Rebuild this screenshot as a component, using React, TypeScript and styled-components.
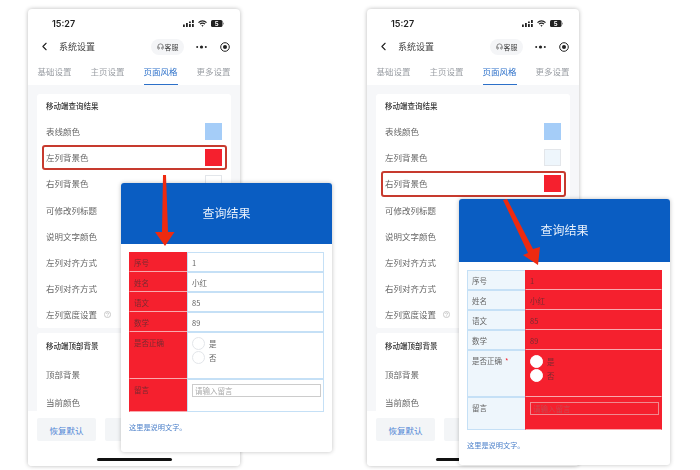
import React from "react";
import styled, { createGlobalStyle } from "styled-components";
import { ChevronLeft, Headphones } from "lucide-react";

const Global = createGlobalStyle`
  html, body { margin: 0; padding: 0; background: #fff; }
  body { font-family: "Noto Sans CJK SC", "Noto Sans", sans-serif; color: #555; overflow: hidden; }
`;

const Page = styled.div`
  width: 700px;
  height: 470px;
  box-sizing: border-box;
  padding: 9px 0 0 28px;
  display: flex;
  gap: 127px;
  align-items: flex-start;
  filter: blur(0.35px);
`;
const Frame = styled.div`
  position: relative;
  width: 212px;
  height: 457px;
  flex: none;
`;
const Phone = styled.div`
  height: 100%;
  display: flex;
  flex-direction: column;
  background: #fff;
  border-radius: 4px;
  overflow: hidden;
  box-shadow: 0 0 4px rgba(0, 0, 0, 0.28);
`;
const StatusBar = styled.div`
  height: 28px;
  flex: none;
  display: flex;
  align-items: center;
  justify-content: space-between;
  padding: 0 16px 0 24px;
`;
const Time = styled.span`
  font: 600 9px "Inter", "Noto Sans", sans-serif;
  color: #222;
`;
const StatusIcons = styled.div`
  display: flex;
  align-items: center;
  gap: 4px;
`;
const NavBar = styled.div`
  height: 19px;
  flex: none;
  display: flex;
  align-items: center;
  padding: 0 10px;
  color: #222;
`;
const NavTitle = styled.span`
  font-size: 9px;
  color: #444;
  margin-left: 8px;
  flex: 1;
`;
const ServicePill = styled.span`
  display: flex;
  align-items: center;
  gap: 1px;
  height: 16px;
  width: 33px;
  justify-content: center;
  border-radius: 8px;
  background: #f4f5f7;
  font-size: 7px;
  color: #444;
`;
const NavActions = styled.div`
  display: flex;
  align-items: center;
  gap: 13px;
  margin-left: 12px;
`;
const Tabs = styled.div`
  height: 29px;
  flex: none;
  display: grid;
  grid-template-columns: repeat(4, 1fr);
  justify-items: center;
  align-items: end;
`;
const Tab = styled.div<{ $active?: boolean }>`
  font-size: 8.5px;
  line-height: 12px;
  padding: 0 0 7px;
  width: 34px;
  text-align: center;
  white-space: nowrap;
  color: ${(p) => (p.$active ? "#2c70c9" : "#9a9ea4")};
  border-bottom: 1px solid ${(p) => (p.$active ? "#2c70c9" : "transparent")};
`;
const Body = styled.div`
  flex: 1;
  min-height: 0;
  overflow: hidden;
  background: #f6f7f9;
  padding: 9px 9px 0;
  display: flex;
  flex-direction: column;
  gap: 5px;
`;
const Card = styled.div`
  background: #fff;
  border-radius: 3px;
  padding: 0 9px;
  flex: none;
`;
const CardTitle = styled.div<{ $h: number }>`
  height: ${(p) => p.$h}px;
  box-sizing: border-box;
  padding-bottom: 1px;
  display: flex;
  align-items: center;
  font-size: 7.5px;
  font-weight: 500;
  color: #333;
`;
const Row = styled.div<{ $h: number; $on?: boolean }>`
  position: relative;
  height: ${(p) => p.$h}px;
  display: flex;
  align-items: center;
  justify-content: space-between;
  font-size: 8.5px;
  color: #666;
  white-space: nowrap;
  &::after {
    content: "";
    display: ${(p) => (p.$on ? "block" : "none")};
    position: absolute;
    inset: 1px -5px 0 -4px;
    border: 2px solid #c73a2e;
    border-radius: 3px;
  }
`;
const LabelWrap = styled.span`
  display: flex;
  align-items: center;
  gap: 7px;
`;
const Swatch = styled.span<{ $color: string; $edged?: boolean }>`
  width: 17px;
  height: 17px;
  flex: none;
  background: ${(p) => p.$color};
  box-sizing: border-box;
  border: ${(p) => (p.$edged ? "1px solid #e3e6ea" : "none")};
`;
const Footer = styled.div`
  height: 55px;
  box-sizing: border-box;
  flex: none;
  padding: 7px 9px 0;
  display: flex;
  flex-direction: column;
  background: #fff;
`;
const Buttons = styled.div`
  display: flex;
  gap: 9px;
`;
const FootButton = styled.div`
  width: 59px;
  height: 23px;
  display: flex;
  align-items: center;
  justify-content: center;
  background: #f3f5f7;
  border-radius: 2px;
  font-size: 8.5px;
  color: #5287d6;
`;
const HomeBar = styled.div`
  width: 75px;
  height: 3px;
  background: #111;
  border-radius: 2px;
  align-self: center;
  margin-top: 17px;
`;
const Popup = styled.div<{ $left: number; $top: number; $height: number }>`
  position: absolute;
  left: ${(p) => p.$left}px;
  top: ${(p) => p.$top}px;
  width: 211px;
  height: ${(p) => p.$height}px;
  display: flex;
  flex-direction: column;
  background: #fff;
  border-radius: 3px;
  overflow: hidden;
  box-shadow: 0 0 4px rgba(0, 0, 0, 0.25);
`;
const PopupHead = styled.div<{ $h: number }>`
  height: ${(p) => p.$h}px;
  flex: none;
  box-sizing: border-box;
  padding-bottom: 3px;
  display: flex;
  align-items: center;
  justify-content: center;
  background: #0a5dc2;
  color: #e6effa;
  font-size: 12px;
`;
const PopupBody = styled.div`
  padding: 8px 8px 0;
`;
const Table = styled.div`
  display: grid;
  grid-template-columns: 58px 137px;
  grid-template-rows: 20px 20px 20px 20px 47px 33px;
  width: 195px;
`;
const HeadCell = styled.div<{ $red: boolean }>`
  box-sizing: border-box;
  padding: 3.5px 0 0 4px;
  font-size: 7.5px;
  line-height: 11px;
  background: ${(p) => (p.$red ? "#f5202e" : "#eef6fc")};
  color: ${(p) => (p.$red ? "#7c2a31" : "#666")};
  border: 1px solid ${(p) => (p.$red ? "#f5202e" : "#c5e0f6")};
  border-bottom-color: ${(p) => (p.$red ? "#f9a9ae" : "#c5e0f6")};
  border-right: none;
`;
const Star = styled.span`
  color: #f5202e;
  margin-left: 3px;
`;
const ValueCell = styled.div<{ $red: boolean }>`
  box-sizing: border-box;
  padding: 3.5px 4px 0 4px;
  font-size: 7.5px;
  line-height: 11px;
  background: ${(p) => (p.$red ? "#f5202e" : "#fff")};
  color: ${(p) => (p.$red ? "#7c2a31" : "#666")};
  border: 1px solid ${(p) => (p.$red ? "#f5202e" : "#c5e0f6")};
  border-bottom-color: ${(p) => (p.$red ? "#f9a9ae" : "#c5e0f6")};
`;
const Radios = styled.div`
  display: flex;
  flex-direction: column;
`;
const RadioLine = styled.label`
  display: flex;
  align-items: center;
  gap: 4px;
  height: 14px;
`;
const RadioDot = styled.span<{ $red: boolean }>`
  width: 13px;
  height: 13px;
  box-sizing: border-box;
  border-radius: 50%;
  background: #fff;
  border: 1px solid ${(p) => (p.$red ? "#fff" : "#e3e6ea")};
`;
const TextInput = styled.input<{ $red: boolean }>`
  display: block;
  box-sizing: border-box;
  width: 129px;
  height: 13px;
  padding: 0 2px;
  margin: 0.5px 0 0;
  font: 7.5px "Noto Sans CJK SC", sans-serif;
  background: transparent;
  border: 1px solid ${(p) => (p.$red ? "#f08a8f" : "#ccc")};
  outline: none;
  &::placeholder {
    color: ${(p) => (p.$red ? "#c9474f" : "#aaa")};
    opacity: 1;
  }
`;
const Note = styled.div`
  margin-top: 10px;
  font-size: 7.2px;
  line-height: 11px;
  color: #4a7fc9;
`;
const ArrowSvg = styled.svg<{ $left: number; $top: number }>`
  position: absolute;
  left: ${(p) => p.$left}px;
  top: ${(p) => p.$top}px;
  overflow: visible;
`;

const Signal = () => (
  <svg width="11" height="7" viewBox="0 0 11 7" fill="#222">
    <rect x="0" y="4.5" width="1.8" height="2.5" />
    <rect x="3" y="3" width="1.8" height="4" />
    <rect x="6" y="1.5" width="1.8" height="1.6" />
    <rect x="6" y="4" width="1.8" height="3" />
    <rect x="9" y="0" width="1.8" height="3" />
    <rect x="9" y="4" width="1.8" height="3" />
  </svg>
);
const Wifi = () => (
  <svg width="9" height="7" viewBox="0 0 9 7" fill="none" stroke="#222" strokeWidth="1.2">
    <path d="M.5 2.6a5.6 5.6 0 0 1 8 0" />
    <path d="M2 4.1a3.5 3.5 0 0 1 5 0" />
    <path d="M4.5 6.8 3.4 5.6a1.5 1.5 0 0 1 2.2 0z" fill="#222" stroke="none" />
  </svg>
);
const Battery = () => (
  <svg width="13" height="7" viewBox="0 0 13 7">
    <rect x="0" y="0" width="11.5" height="7" rx="1.6" fill="#222" />
    <rect x="12" y="2.4" width="1" height="2.2" rx="0.5" fill="#999" />
    <text x="5.7" y="6" fontSize="6" fontWeight="700" textAnchor="middle" fill="#fff" fontFamily="Inter, sans-serif">5</text>
  </svg>
);
const Dots = () => (
  <svg width="11" height="4" viewBox="0 0 11 4" fill="#222">
    <circle cx="1.2" cy="2" r="1" />
    <circle cx="5.5" cy="2" r="1.6" />
    <circle cx="9.8" cy="2" r="1" />
  </svg>
);
const Target = () => (
  <svg width="10" height="10" viewBox="0 0 10 10">
    <circle cx="5" cy="5" r="4.3" fill="none" stroke="#222" strokeWidth="1" />
    <circle cx="5" cy="5" r="2" fill="#222" />
  </svg>
);
const Help = () => (
  <svg width="7" height="7" viewBox="0 0 7 7" fill="none" stroke="#aaa" strokeWidth="0.6">
    <circle cx="3.5" cy="3.5" r="3.1" />
    <path d="M2.5 2.8a1 1 0 1 1 1.4.9c-.3.2-.4.3-.4.7M3.5 5.1v.4" />
  </svg>
);

const tabs = ["基础设置", "主页设置", "页面风格", "更多设置"];
const labels = ["表线颜色", "左列背景色", "右列背景色", "可修改列标题", "说明文字颜色", "左列对齐方式", "右列对齐方式", "左列宽度设置"];
const records = [
  ["序号", "1"],
  ["姓名", "小红"],
  ["语文", "85"],
  ["数学", "89"],
];

type Variant = {
  highlight: number;
  swatches: { color: string; edged?: boolean }[];
  popup: { left: number; top: number; height: number; head: number };
  redHead: boolean;
};

const variants: Variant[] = [
  {
    highlight: 1,
    swatches: [{ color: "#a5cdf8" }, { color: "#f5202e" }, { color: "#fff", edged: true }],
    popup: { left: 93, top: 174, height: 269, head: 61 },
    redHead: true,
  },
  {
    highlight: 2,
    swatches: [{ color: "#a5cdf8" }, { color: "#eef6fc", edged: true }, { color: "#f5202e" }],
    popup: { left: 92, top: 190, height: 266, head: 63 },
    redHead: false,
  },
];

const ResultTable = ({ redHead }: { redHead: boolean }) => {
  const redValue = !redHead;
  return (
    <Table>
      {records.map(([k, v]) => (
        <React.Fragment key={k}>
          <HeadCell $red={redHead}>{k}</HeadCell>
          <ValueCell $red={redValue}>{v}</ValueCell>
        </React.Fragment>
      ))}
      <HeadCell $red={redHead}>
        是否正确{!redHead && <Star>*</Star>}
      </HeadCell>
      <ValueCell $red={redValue}>
        <Radios>
          <RadioLine><RadioDot $red={redValue} />是</RadioLine>
          <RadioLine><RadioDot $red={redValue} />否</RadioLine>
        </Radios>
      </ValueCell>
      <HeadCell $red={redHead}>留言</HeadCell>
      <ValueCell $red={redValue}>
        <TextInput $red={redValue} placeholder="请输入留言" readOnly />
      </ValueCell>
    </Table>
  );
};

const Screen = ({ v, children }: { v: Variant; children: React.ReactNode }) => (
  <Frame>
    <Phone>
      <StatusBar>
        <Time>15:27</Time>
        <StatusIcons><Signal /><Wifi /><Battery /></StatusIcons>
      </StatusBar>
      <NavBar>
        <ChevronLeft size={13} strokeWidth={2} />
        <NavTitle>系统设置</NavTitle>
        <ServicePill><Headphones size={7} strokeWidth={2} />客服</ServicePill>
        <NavActions><Dots /><Target /></NavActions>
      </NavBar>
      <Tabs>
        {tabs.map((t, i) => <Tab key={t} $active={i === 2}>{t}</Tab>)}
      </Tabs>
      <Body>
        <Card>
          <CardTitle $h={24}>移动端查询结果</CardTitle>
          {labels.map((l, i) => (
            <Row key={l} $h={26.2} $on={i === v.highlight}>
              <LabelWrap>{l}{i === 7 && <Help />}</LabelWrap>
              {v.swatches[i] && <Swatch $color={v.swatches[i].color} $edged={v.swatches[i].edged} />}
            </Row>
          ))}
        </Card>
        <Card>
          <CardTitle $h={27}>移动端顶部背景</CardTitle>
          <Row $h={28}>顶部背景</Row>
          <Row $h={28}>当前颜色</Row>
        </Card>
      </Body>
      <Footer>
        <Buttons>
          <FootButton>恢复默认</FootButton>
          <FootButton />
        </Buttons>
        <HomeBar />
      </Footer>
    </Phone>
    <Popup $left={v.popup.left} $top={v.popup.top} $height={v.popup.height}>
      <PopupHead $h={v.popup.head}>查询结果</PopupHead>
      <PopupBody>
        <ResultTable redHead={v.redHead} />
        <Note>这里是说明文字。</Note>
      </PopupBody>
    </Popup>
    {children}
  </Frame>
);

export default function App() {
  return (
    <>
      <Global />
      <Page>
        <Screen v={variants[0]}>
          <ArrowSvg $left={125} $top={165} width="24" height="74" viewBox="0 0 24 74">
            <polygon points="10,1 13,1 15,58 21.5,58 12,72 2,58 9,58" fill="#ee2a10" />
          </ArrowSvg>
        </Screen>
        <Screen v={variants[1]}>
          <ArrowSvg $left={135} $top={190} width="42" height="68" viewBox="0 0 42 68">
            <polygon points="1,1 5,0 31,50 38,48 36,66 21,56 26,54" fill="#ee2a10" />
          </ArrowSvg>
        </Screen>
      </Page>
    </>
  );
}
